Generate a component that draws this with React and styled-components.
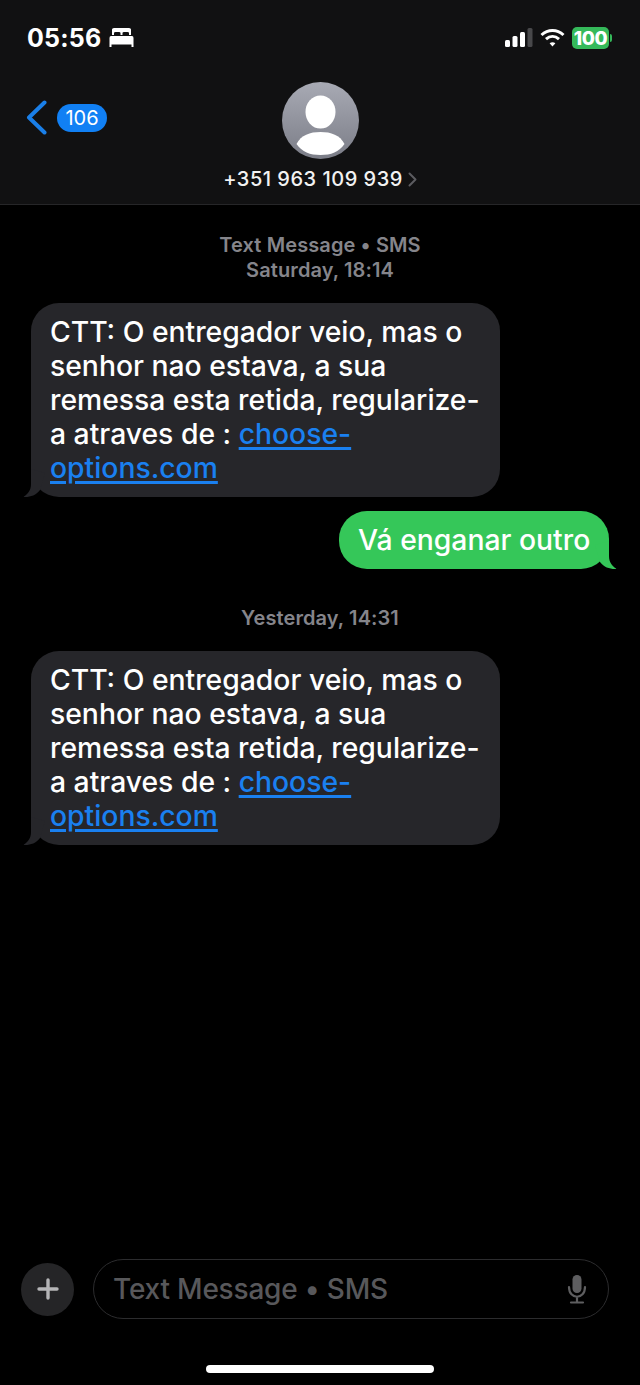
import React from 'react';
import styled, { createGlobalStyle } from 'styled-components';

const GlobalStyle = createGlobalStyle`
  html, body { margin: 0; padding: 0; background: #000; }
  * { box-sizing: border-box; }
`;

const Screen = styled.div`
  width: 640px;
  height: 1385px;
  display: flex;
  flex-direction: column;
  background: #000;
  color: #fff;
  font-family: Inter, "Liberation Sans", sans-serif;
  overflow: hidden;
`;

const Header = styled.header`
  height: 205px;
  flex: none;
  padding-top: 22px;
  background: #111112;
  border-bottom: 1px solid #262628;
`;

const StatusBar = styled.div`
  height: 32px;
  padding: 0 28px 0 27px;
  display: flex;
  align-items: center;
  justify-content: space-between;
`;

const StatusLeft = styled.div`
  display: flex;
  align-items: center;
  gap: 8px;
`;

const StatusRight = styled.div`
  display: flex;
  align-items: center;
  gap: 7px;
`;

const Clock = styled.span`
  font-size: 25px;
  font-weight: 700;
  letter-spacing: 0.2px;
`;

const Battery = styled.div`
  width: 37px;
  height: 22px;
  border-radius: 5px;
  background: #35b95a;
  font-size: 19px;
  font-weight: 800;
  letter-spacing: -0.4px;
  display: flex;
  align-items: center;
  justify-content: center;
`;

const BatteryWrap = styled.div`
  display: flex;
  align-items: center;
  gap: 1px;
`;

const BatteryCap = styled.div`
  width: 2px;
  height: 8px;
  border-radius: 0 2px 2px 0;
  background: #35b95a;
`;

const Nav = styled.div`
  margin-top: 28px;
  display: grid;
  grid-template-columns: 1fr 200px 1fr;
`;

const Back = styled.div`
  padding: 18px 0 0 26px;
  display: flex;
  align-items: flex-start;
  gap: 10px;
`;

const Badge = styled.div`
  width: 50px;
  height: 28px;
  margin-top: 4px;
  border-radius: 14px;
  background: #1180f4;
  font-size: 20px;
  line-height: 28px;
  text-align: center;
`;

const Contact = styled.div`
  display: flex;
  flex-direction: column;
  align-items: center;
`;

const Number = styled.div`
  margin-top: 7px;
  display: flex;
  align-items: center;
  gap: 5px;
  font-size: 20px;
  font-weight: 500;
  line-height: 26px;
  letter-spacing: 0.5px;
  color: #f2f2f2;
`;

const Thread = styled.main`
  flex: 1;
  padding-top: 28px;
  display: flex;
  flex-direction: column;
`;

const Stamp = styled.div`
  margin-bottom: ${p => p.$gap}px;
  font-size: 20px;
  font-weight: 600;
  line-height: 25px;
  letter-spacing: 0.1px;
  text-align: center;
  color: #85858b;
`;

const Bubble = styled.div`
  position: relative;
  align-self: ${p => (p.$sent ? 'flex-end' : 'flex-start')};
  margin: ${p => (p.$sent ? '0 31px 0 0' : '0 0 0 31px')};
  width: ${p => (p.$sent ? 270 : 469)}px;
  padding: 12px 19px;
  border-radius: 28px;
  background: ${p => (p.$sent ? '#35c759' : '#26262a')};
  font-size: 28.3px;
  font-weight: 500;
  line-height: 34px;
  white-space: nowrap;
  margin-bottom: ${p => p.$gap}px;
  color: #fff;
`;

const Link = styled.span`
  color: #1a80f0;
  text-decoration: underline;
  text-decoration-thickness: 3px;
  text-underline-offset: 3px;
`;

const TailShape = styled.svg`
  position: absolute;
  bottom: 0;
  ${p => (p.$sent ? 'right: -8px; transform: scaleX(-1);' : 'left: -8px;')}
`;

const Composer = styled.div`
  flex: none;
  padding: 0 31px 0 21px;
  display: flex;
  align-items: center;
  gap: 19px;
`;

const PlusButton = styled.div`
  width: 53px;
  height: 53px;
  border-radius: 50%;
  background: #252527;
  display: flex;
  align-items: center;
  justify-content: center;
`;

const Field = styled.div`
  flex: 1;
  height: 60px;
  padding: 0 21px 0 19px;
  border: 1.5px solid #2c2c2e;
  border-radius: 30px;
  display: flex;
  align-items: center;
  justify-content: space-between;
  font-size: 28px;
  font-weight: 500;
  letter-spacing: -0.2px;
  color: #58585b;
`;

const HomeBarRow = styled.div`
  flex: none;
  padding: 46px 0 12px;
  display: flex;
  justify-content: center;
`;

const HomeBar = styled.div`
  width: 228px;
  height: 8px;
  border-radius: 4px;
  background: #fff;
`;

const Message = () => (
  <>
    CTT: O entregador veio, mas o<br />
    senhor nao estava, a sua<br />
    remessa esta retida, regularize-<br />
    a atraves de : <Link>choose-</Link><br />
    <Link>options.com</Link>
  </>
);

const Tail = ({ sent }) => (
  <TailShape $sent={sent} width="24" height="30" viewBox="0 0 24 30">
    <path d="M8 2 V17 C8 23 5 27 1 29.5 C0.5 30 1 30 2 30 C8 30 13 28 17 23 L22 6 Z" fill={sent ? '#35c759' : '#26262a'} />
  </TailShape>
);

export default function App() {
  return (
    <Screen>
      <GlobalStyle />
      <Header>
        <StatusBar>
          <StatusLeft>
            <Clock>05:56</Clock>
            <svg width="25" height="20" viewBox="0 0 25 20" fill="#fff">
              <path d="M3 1.5 Q3 0 5 0 H20 Q22 0 22 1.5 V7 H20 V5 Q20 4 18.5 4 H15 Q13.5 4 13.5 5 V7 H11.5 V5 Q11.5 4 10 4 H6.5 Q5 4 5 5 V7 H3 Z" />
              <path d="M2 8 H23 Q24.5 8 24.5 10 V19 H22.5 V16.5 H2.5 V19 H0.5 V10 Q0.5 8 2 8 Z" />
            </svg>
          </StatusLeft>
          <StatusRight>
            <svg width="29" height="20" viewBox="0 0 29 20">
              <rect x="1" y="12" width="5" height="7" rx="1.5" fill="#fff" />
              <rect x="8.5" y="8" width="5" height="11" rx="1.5" fill="#fff" />
              <rect x="16" y="4" width="5" height="15" rx="1.5" fill="#fff" />
              <rect x="23.5" y="0" width="5" height="19" rx="1.5" fill="#48484a" />
            </svg>
            <svg width="25" height="20" viewBox="0 0 25 20" fill="none" stroke="#fff" strokeWidth="3">
              <path d="M1.5 7 C8 1 17 1 23.5 7" />
              <path d="M6 11.2 C10 7.6 15 7.6 19 11.2" />
              <path d="M12.5 18.5 L9.6 15.2 C11.3 13.8 13.7 13.8 15.4 15.2 Z" fill="#fff" stroke="none" />
            </svg>
            <BatteryWrap>
              <Battery>100</Battery>
              <BatteryCap />
            </BatteryWrap>
          </StatusRight>
        </StatusBar>
        <Nav>
          <Back>
            <svg width="21" height="35" viewBox="0 0 21 35" fill="none" stroke="#1a7fe8" strokeWidth="4" strokeLinecap="round" strokeLinejoin="round">
              <path d="M18.5 2.5 L3 17.5 L18.5 32.5" />
            </svg>
            <Badge>106</Badge>
          </Back>
          <Contact>
            <svg width="77" height="77" viewBox="0 0 77 77">
              <defs>
                <linearGradient id="avatarFill" x1="0" y1="0" x2="0" y2="1">
                  <stop offset="0" stopColor="#a8aab4" />
                  <stop offset="1" stopColor="#7b7d87" />
                </linearGradient>
                <clipPath id="avatarClip">
                  <circle cx="38.5" cy="38.5" r="38.5" />
                </clipPath>
              </defs>
              <circle cx="38.5" cy="38.5" r="38.5" fill="url(#avatarFill)" />
              <g clipPath="url(#avatarClip)" fill="#fff">
                <ellipse cx="38.5" cy="30" rx="15" ry="16.5" />
                <path d="M14.5 62 C19 53 28 50 38.5 50 C49 50 58 53 62.5 62 C57 70 49 73 38.5 73 C28 73 20 70 14.5 62 Z" />
              </g>
            </svg>
            <Number>
              +351 963 109 939
              <svg width="9" height="15" viewBox="0 0 9 15" fill="none" stroke="#5c5c60" strokeWidth="2" strokeLinecap="round" strokeLinejoin="round">
                <path d="M1.5 1.5 L7.5 7.5 L1.5 13.5" />
              </svg>
            </Number>
          </Contact>
          <div />
        </Nav>
      </Header>

      <Thread>
        <Stamp $gap={20}>
          Text Message • SMS<br />
          Saturday, 18:14
        </Stamp>
        <Bubble $gap={14}>
          <Message />
          <Tail />
        </Bubble>
        <Bubble $sent $gap={37}>
          Vá enganar outro
          <Tail sent />
        </Bubble>
        <Stamp $gap={20}>Yesterday, 14:31</Stamp>
        <Bubble>
          <Message />
          <Tail />
        </Bubble>
      </Thread>

      <Composer>
        <PlusButton>
          <svg width="22" height="22" viewBox="0 0 22 22" stroke="#b5b5b7" strokeWidth="3.4" strokeLinecap="round">
            <path d="M11 2 V20 M2 11 H20" />
          </svg>
        </PlusButton>
        <Field>
          Text Message • SMS
          <svg width="20" height="30" viewBox="0 0 20 30" fill="none" stroke="#5e5e60" strokeWidth="2.2" strokeLinecap="round">
            <rect x="5.5" y="1" width="9" height="18" rx="4.5" fill="#5e5e60" stroke="none" />
            <path d="M2 13 C2 26 18 26 18 13 M10 23 V28 M4 28.5 H16" />
          </svg>
        </Field>
      </Composer>
      <HomeBarRow>
        <HomeBar />
      </HomeBarRow>
    </Screen>
  );
}
